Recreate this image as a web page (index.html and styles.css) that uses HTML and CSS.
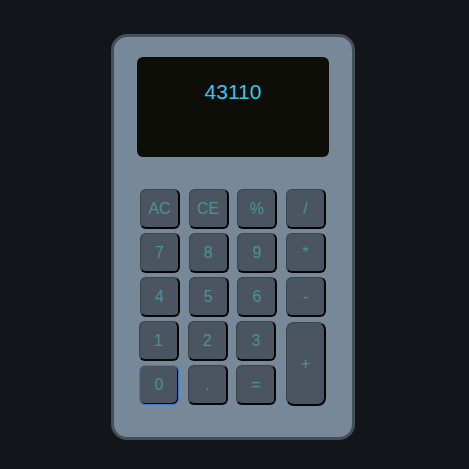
FILE: index.html
```html
<!DOCTYPE html>
<html>
<head>
<meta charset="utf-8">
<link rel="stylesheet" href="styles.css">
</head>
<body>
<div class="page">
  <div class="calc">
    <div class="display">43110</div>
    <div class="keys">
      <button class="key">AC</button>
      <button class="key">CE</button>
      <button class="key">%</button>
      <button class="key">/</button>
      <button class="key">7</button>
      <button class="key">8</button>
      <button class="key">9</button>
      <button class="key">*</button>
      <button class="key">4</button>
      <button class="key">5</button>
      <button class="key">6</button>
      <button class="key">-</button>
      <button class="key low">1</button>
      <button class="key low">2</button>
      <button class="key low">3</button>
      <button class="key plus">+</button>
      <button class="key low focus">0</button>
      <button class="key low">.</button>
      <button class="key low">=</button>
    </div>
  </div>
</div>
</body>
</html>
```
FILE: styles.css
```css
html, body {
  margin: 0;
  padding: 0;
  background: #12161a;
  height: 100%;
}
.page {
  padding: 34px 0 0 111px;
}
.calc {
  box-sizing: border-box;
  width: 244px;
  height: 406px;
  border: 3px solid #464e57;
  border-radius: 16px;
  background: #778899;
  padding: 20px 23px 0 23px;
}
.display {
  height: 100px;
  background: #0e0e08;
  border-radius: 6px;
  color: #3cc3ee;
  font-family: "Liberation Sans", Arial, sans-serif;
  font-size: 21px;
  text-align: center;
  padding-top: 23px;
  box-sizing: border-box;
}
.keys {
  margin: 32px 0 0 3px;
  display: grid;
  grid-template-columns: repeat(4, 40px);
  grid-template-rows: repeat(5, 40px);
  column-gap: 8.7px;
  row-gap: 4px;
}
.key {
  box-sizing: border-box;
  width: 40px;
  height: 40px;
  margin: 0;
  padding: 0;
  background: #4a5561;
  border: 1px solid #3b434c;
  border-right: 2px solid #050505;
  border-bottom: 2px solid #050505;
  border-radius: 6px;
  color: #4d9196;
  font-family: "Liberation Sans", Arial, sans-serif;
  font-size: 16px;
}
.low {
  margin-left: -1px;
  margin-top: 0;
}
.plus {
  grid-column: 4;
  grid-row: 4 / span 2;
  height: 84px;
  margin-top: 1px;
  border-radius: 8px;
}
.focus {
  border: 1px solid #3a78d8;
  border-right: 1px solid #3a78d8;
  border-bottom: 1px solid #3a78d8;
  box-shadow: inset -1px -1px 0 #050505;
}
```
